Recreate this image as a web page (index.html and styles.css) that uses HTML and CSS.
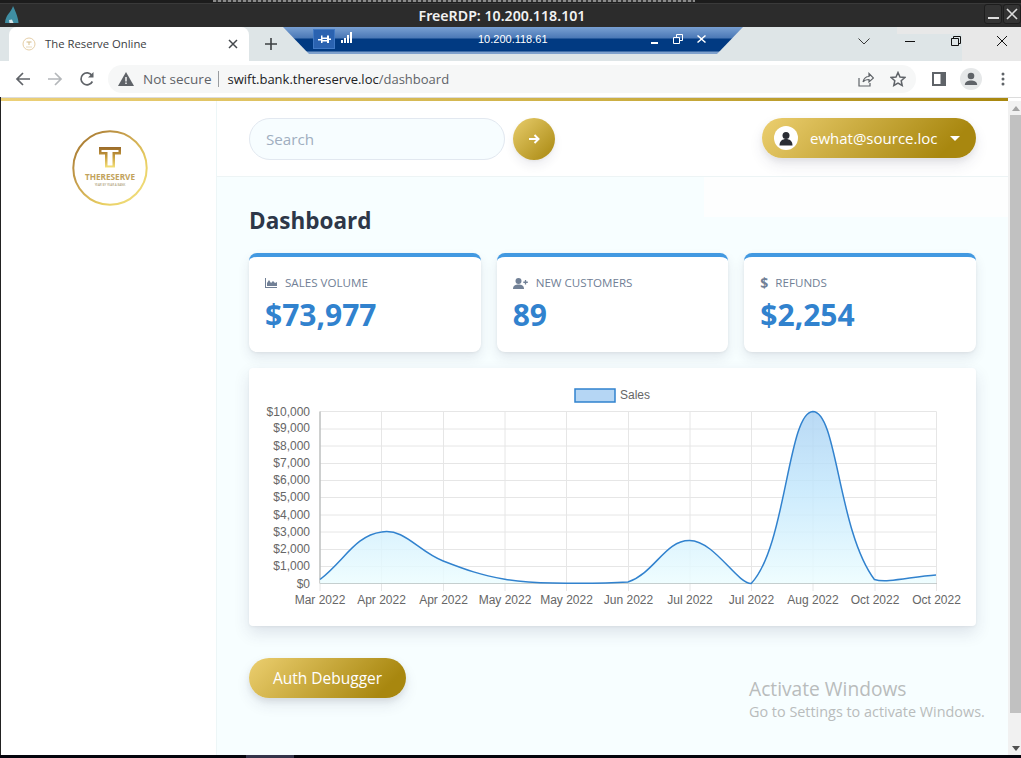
FILE: index.html
```html
<!DOCTYPE html>
<html lang="en">
<head>
<meta charset="utf-8">
<title>The Reserve Online</title>
<link rel="stylesheet" href="styles.css">
</head>
<body>
<div class="screen">
  <div class="remote-strip"><span class="remote-text"></span></div>
  <header class="rdp-title">
    <svg class="rdp-logo" viewBox="0 0 14 17" width="14" height="17"><path d="M8 0C7 4 3 8 1.500 11C.5 13 0 15 0 17H13.500C13.500 13 11 6 8 0Z" fill="#3f8ea3"/><path d="M4 14L7 13.500L8.500 17H4.500Z" fill="#d8e6ea"/></svg>
    <span class="rdp-name">FreeRDP: 10.200.118.101</span>
    <div class="rdp-controls">
      <span class="rdp-btn"><i class="rdp-min"></i></span>
      <span class="rdp-btn">
        <svg viewBox="0 0 12 12" width="12" height="12"><path d="M1 1 11 11M11 1 1 11" stroke="#ddd" stroke-width="1.6"/></svg>
      </span>
    </div>
  </header>

  <div class="tabstrip">
    <div class="tab">
      <svg class="favicon" viewBox="0 0 14 14" width="14" height="14"><circle cx="7" cy="7" r="6" fill="#fff" stroke="#e6cfa8" stroke-width="1"/><path d="M4.500 4.500H9.500V5.500H7.500V8H6.500V5.500H4.500Z" fill="#d5bd8a"/><path d="M4 10H10" stroke="#e2d2ae" stroke-width=".8"/></svg>
      <span class="tab-title">The Reserve Online</span>
      <svg class="tab-close" viewBox="0 0 10 10" width="10" height="10"><path d="M1 1 9 9M9 1 1 9" stroke="#45494d" stroke-width="1.500"/></svg>
    </div>
    <svg class="new-tab" viewBox="0 0 12 12" width="12" height="12"><path d="M6 0V12M0 6H12" stroke="#3c4043" stroke-width="1.600"/></svg>
    <div class="strip-fill"></div>
    <svg class="win-chevron" viewBox="0 0 12 7" width="12" height="7"><path d="M.5 .5 6 6 11.500 .5" fill="none" stroke="#3a3a3a"/></svg>
    <div class="win-controls">
      <span class="win-btn"><svg viewBox="0 0 10 10" width="10" height="10"><path d="M0 5.500H10" stroke="#111"/></svg></span>
      <span class="win-btn"><svg viewBox="0 0 10 10" width="10" height="10"><path d="M.5 2.500H7.500V9.500H.5ZM2.500 2.500V.5H9.500V7.500H7.500" fill="none" stroke="#111"/></svg></span>
      <span class="win-btn"><svg viewBox="0 0 10 10" width="10" height="10"><path d="M0 0 10 10M10 0 0 10" stroke="#111" stroke-width="1"/></svg></span>
    </div>
  </div>

  <div class="rdp-bar">
    <div class="pin-box"><svg viewBox="0 0 13 9" width="13" height="9"><path d="M0 4H3V0.500H4.500V8H3V5.500H0ZM4.500 2.500H9V4H4.500ZM4.500 5H9V6.500H4.500ZM9 .5H11V8H9ZM11 3.500H13V5H11Z" fill="#fff"/></svg></div>
    <svg class="signal" viewBox="0 0 11 11" width="11" height="11"><path d="M0 8H2V11H0ZM3 6H5V11H3ZM6 3H8V11H6ZM9 0H11V11H9Z" fill="#fff"/></svg>
    <span class="rdp-ip">10.200.118.61</span>
    <svg class="bar-min" viewBox="0 0 8 8" width="8" height="8"><path d="M0 6H7V8H0Z" fill="#fff"/></svg>
    <svg class="bar-restore" viewBox="0 0 10 10" width="10" height="10"><path d="M.5 3.500H6.500V9.500H.5ZM3.500 3V.5H9.500V6.500H7" fill="none" stroke="#fff" stroke-width="1"/></svg>
    <svg class="bar-close" viewBox="0 0 9 8" width="9" height="8"><path d="M1 0 4.500 3 8 0 9 1 5.500 4 9 7 8 8 4.500 5 1 8 0 7 3.500 4 0 1Z" fill="#fff"/></svg>
  </div>

  <nav class="toolbar">
    <svg class="tool-icon" viewBox="0 0 16 16" width="16" height="16"><path d="M15 8H2M8 2 2 8 8 14" fill="none" stroke="#5f6368" stroke-width="1.700"/></svg>
    <svg class="tool-icon" viewBox="0 0 16 16" width="16" height="16"><path d="M1 8H14M8 2 14 8 8 14" fill="none" stroke="#b4b7ba" stroke-width="1.700"/></svg>
    <svg class="tool-icon" viewBox="0 0 16 16" width="16" height="16"><path d="M13.400 10.500A6 6 0 1 1 13 4.500" fill="none" stroke="#5f6368" stroke-width="1.700"/><path d="M14.500 1V6.500H9Z" fill="#5f6368"/></svg>
    <div class="omnibox">
      <svg class="warn" viewBox="0 0 16 14" width="16" height="14"><path d="M8 0 16 14H0Z" fill="#5f6368"/><path d="M7.300 5H8.700V9.500H7.300ZM7.300 10.500H8.700V12H7.300Z" fill="#fff"/></svg>
      <span class="not-secure">Not secure</span>
      <span class="omni-sep"></span>
      <span class="url"><b>swift.bank.thereserve.loc</b>/dashboard</span>
      <svg class="omni-share" viewBox="0 0 16 16" width="16" height="16"><path d="M1 7V15H12V12M5 11C6 7 9 5.500 11 5.500V2.500L15.500 7 11 11V8.500C9 8.500 6.500 9 5 11Z" fill="none" stroke="#5f6368" stroke-width="1.200"/></svg>
      <svg class="omni-star" viewBox="0 0 16 16" width="16" height="16"><path d="M8 1.500 10 6 14.800 6.500 11.200 9.700 12.200 14.500 8 12 3.800 14.500 4.800 9.700 1.200 6.500 6 6Z" fill="none" stroke="#5f6368" stroke-width="1.500"/></svg>
    </div>
    <svg class="panel-icon" viewBox="0 0 14 14" width="14" height="14"><path d="M0 0H14V14H0Z" fill="#5f6368"/><path d="M2 2H8.500V12H2Z" fill="#fff"/></svg>
    <span class="profile"><svg viewBox="0 0 14 14" width="14" height="14"><circle cx="7" cy="4" r="3.300" fill="#5f6368"/><path d="M.8 13C1 9.500 4 8.500 7 8.500S13 9.500 13.200 13Z" fill="#5f6368"/></svg></span>
    <svg class="menu-dots" viewBox="0 0 4 14" width="4" height="14"><circle cx="2" cy="2" r="1.500" fill="#5f6368"/><circle cx="2" cy="7" r="1.500" fill="#5f6368"/><circle cx="2" cy="12" r="1.500" fill="#5f6368"/></svg>
  </nav>

  <div class="viewport">
    <div class="gold-row"><div class="gold-bar"></div></div>
    <div class="page">
      <aside class="sidebar">
        <svg class="logo" viewBox="0 0 76 76" width="76" height="76">
          <defs>
            <linearGradient id="ring" x1="0" y1="0" x2="1" y2="1">
              <stop offset="0" stop-color="#a0702a"/><stop offset=".4" stop-color="#c9a24e"/><stop offset=".7" stop-color="#e9cf62"/><stop offset="1" stop-color="#f3e388"/>
            </linearGradient>
            <linearGradient id="tee" x1="0" y1="0" x2="0" y2="1">
              <stop offset="0" stop-color="#9a6a2a"/><stop offset=".5" stop-color="#c9a040"/><stop offset="1" stop-color="#f6e27a"/>
            </linearGradient>
          </defs>
          <circle cx="38" cy="38" r="36.700" fill="#fff" stroke="url(#ring)" stroke-width="2"/>
          <path d="M27 17H49V24.500H43V37.500H33V24.500H27Z M29.500 20V22H35.500V35.500H40.500V22H46.500V20Z" fill="url(#tee)" fill-rule="evenodd"/>
          <text class="logo-word" x="38" y="50" text-anchor="middle">THERESERVE</text>
          <text class="logo-tag" x="38" y="55.500" text-anchor="middle">YEAR BY YEAR A BANK</text>
        </svg>
      </aside>
      <div class="main">
        <div class="topbar">
          <div class="search">Search</div>
          <button class="search-go"><svg viewBox="0 0 12 12" width="12" height="12"><path d="M1 6H10.500M6.500 2 10.500 6 6.500 10" fill="none" stroke="#fff" stroke-width="2"/></svg></button>
          <div class="user-pill">
            <span class="user-avatar"><svg viewBox="0 0 14 14" width="14" height="15"><circle cx="7" cy="4" r="3.500" fill="#2a2d34"/><path d="M.5 14C.5 9.500 3.500 7.500 7 7.500S13.500 9.500 13.500 14Z" fill="#2a2d34"/></svg></span>
            <span class="user-name">ewhat@source.loc</span>
            <span class="caret"></span>
          </div>
        </div>
        <div class="content">
          <div class="glare"></div>
          <h1 class="title">Dashboard</h1>
          <div class="stats">
            <div class="stat">
              <div class="stat-label">
                <svg class="stat-icon" viewBox="0 0 12 10" width="12" height="10"><path d="M0 0H1V9H12V10H0ZM2 8V5L4 2 6 5 8 3 10 5 12 4V8Z" fill="#718096"/></svg>
                <span>SALES VOLUME</span>
              </div>
              <div class="stat-value">$73,977</div>
            </div>
            <div class="stat">
              <div class="stat-label">
                <svg class="stat-icon" viewBox="0 0 15 11" width="15" height="11"><circle cx="5.500" cy="3" r="3" fill="#718096"/><path d="M0 11C0 7.500 2.500 6.500 5.500 6.500S11 7.500 11 11Z" fill="#718096"/><path d="M12.500 2V6.500M10.300 4.250H14.800" stroke="#718096" stroke-width="1.300"/></svg>
                <span>NEW CUSTOMERS</span>
              </div>
              <div class="stat-value">89</div>
            </div>
            <div class="stat">
              <div class="stat-label">
                <span class="stat-dollar">$</span>
                <span>REFUNDS</span>
              </div>
              <div class="stat-value">$2,254</div>
            </div>
          </div>

          <section class="chart-card">
            <svg class="chart" viewBox="0 0 727 258" width="727" height="258">
              <defs>
                <linearGradient id="area" gradientUnits="userSpaceOnUse" x1="0" y1="43" x2="0" y2="215">
                  <stop offset="0" stop-color="#a8d0f2" stop-opacity=".8"/>
                  <stop offset=".45" stop-color="#c0e6fc" stop-opacity=".8"/>
                  <stop offset="1" stop-color="#ecfdff" stop-opacity=".85"/>
                </linearGradient>
              </defs>
              <g class="grid">
                <path d="M71 43.500V223M132.500 43.500V223M194.500 43.500V223M256 43.500V223M317.500 43.500V223M379.500 43.500V223M441 43.500V223M502.500 43.500V223M564 43.500V223M626 43.500V223M687.500 43.500V223"/>
                <path d="M71 43.500H687.500M71 61H687.500M71 78H687.500M71 95.500H687.500M71 112.500H687.500M71 129.500H687.500M71 147H687.500M71 164H687.500M71 181.500H687.500M71 198.500H687.500"/>
              </g>
              <path class="axis" d="M71 43.500V215.500H687.500"/>
              <path class="area" d="M71 211.500C95.600 192.300 106.300 167.400 132.600 164C155.600 160 168.800 183.200 194.200 193C218.100 202.300 230.700 206.700 255.800 211.200C280 215.500 292.800 214.700 317.400 215.300C342 215.500 356.700 215.500 379 214C406 204.600 416.100 172.200 440.600 172.500C465.400 172.800 487.800 215.500 502.200 215.500C537.100 178.900 538.900 44.300 563.800 43.500C588.200 43.500 588.800 162.700 625.400 211.500C638 215.500 662.400 208.600 687 207V215.500H71Z" fill="url(#area)"/>
              <path class="line" d="M71 211.500C95.600 192.300 106.300 167.400 132.600 164C155.600 160 168.800 183.200 194.200 193C218.100 202.300 230.700 206.700 255.800 211.200C280 215.500 292.800 214.700 317.400 215.300C342 215.500 356.700 215.500 379 214C406 204.600 416.100 172.200 440.600 172.500C465.400 172.800 487.800 215.500 502.200 215.500C537.100 178.900 538.900 44.300 563.800 43.500C588.200 43.500 588.800 162.700 625.400 211.500C638 215.500 662.400 208.600 687 207"/>
              <rect class="legend-box" x="326" y="21" width="40" height="13"/>
              <text class="legend-text" x="371" y="31">Sales</text>
              <g class="y-labels">
                <text x="61" y="47.500">$10,000</text><text x="61" y="64">$9,000</text><text x="61" y="82">$8,000</text><text x="61" y="99">$7,000</text><text x="61" y="116">$6,000</text><text x="61" y="133">$5,000</text><text x="61" y="151">$4,000</text><text x="61" y="168">$3,000</text><text x="61" y="185">$2,000</text><text x="61" y="202">$1,000</text><text x="61" y="219.500">$0</text>
              </g>
              <g class="x-labels">
                <text x="71" y="236">Mar 2022</text><text x="132.500" y="236">Apr 2022</text><text x="194.500" y="236">Apr 2022</text><text x="256" y="236">May 2022</text><text x="317.500" y="236">May 2022</text><text x="379.500" y="236">Jun 2022</text><text x="441" y="236">Jul 2022</text><text x="502.500" y="236">Jul 2022</text><text x="564" y="236">Aug 2022</text><text x="626" y="236">Oct 2022</text><text x="687.500" y="236">Oct 2022</text>
              </g>
            </svg>
          </section>

          <button class="auth-btn">Auth Debugger</button>
        </div>
      </div>
      <div class="scrollbar">
        <span class="scroll-up"></span>
        <span class="scroll-thumb"></span>
        <span class="scroll-down"></span>
      </div>
      <div class="activate">
        <div class="activate-title">Activate Windows</div>
        <div class="activate-sub">Go to Settings to activate Windows.</div>
      </div>
    </div>
  </div>
  <footer class="taskbar"><span class="task-item"></span></footer>
</div>
</body>
</html>
```
FILE: styles.css
```css
* { box-sizing: border-box; }
html, body { margin: 0; padding: 0; }
body { width: 1021px; height: 758px; overflow: hidden; font-family: "Open Sans", "Liberation Sans", sans-serif; background: #000; }
.screen { position: relative; width: 1021px; height: 758px; display: flex; flex-direction: column; overflow: hidden; }

.remote-strip { height: 3px; background: #1c1c1c; display: flex; padding-left: 213px; flex: none; }
.remote-text { width: 482px; height: 2px; background: repeating-linear-gradient(90deg, #8a8a8a 0 3px, #3a3a3a 3px 5px); }

.rdp-title { height: 24px; flex: none; background: #2c2c2c; display: flex; align-items: center; justify-content: center; position: relative; color: #f2f2f2; border-top: 1px solid #3a3a3a; padding-right: 17px; }
.rdp-logo { position: absolute; left: 5px; top: 2px; }
.rdp-name { font: 600 14.200px "Noto Sans", "Open Sans", sans-serif; }
.rdp-controls { position: absolute; right: 0; top: 0; display: flex; gap: 1px; }
.rdp-btn { width: 18px; height: 20px; border: 1px solid #1d1d1d; border-radius: 3px; background: #333; display: flex; align-items: center; justify-content: center; }
.rdp-min { display: block; width: 11px; height: 2px; background: #ddd; margin-top: 8px; }

.tabstrip { height: 34px; flex: none; background: #dee5e7; display: flex; align-items: center; padding-left: 9px; position: relative; background-image: linear-gradient(#e8e8e8, #e8e8e8), linear-gradient(#e8e8e8, #e8e8e8); background-size: 124px 7px, 59px 27px; background-position: right top, right bottom; background-repeat: no-repeat; }
.tab { width: 240px; height: 34px; background: #fff; border-radius: 8px 8px 0 0; display: flex; align-items: center; padding: 0 11px 0 13px; }
.favicon { flex: none; }
.tab-title { margin: -2px 0 0 9px; font: 11.300px "Open Sans", sans-serif; color: #3c4043; flex: 1; }
.tab-close { flex: none; }
.new-tab { margin-left: 16px; flex: none; }
.strip-fill { flex: 1; }
.win-chevron { flex: none; margin: -6px 17px 0 0; }
.win-controls { display: flex; flex: none; margin: -6px -4px 0 0; }
.win-btn { width: 46px; display: flex; justify-content: center; }

.rdp-bar { position: absolute; left: 283px; top: 27px; width: 460px; height: 27px; clip-path: polygon(0 0, 100% 0, 434px 100%, 26px 100%); background: linear-gradient(#79a0d2 0, #4a78b6 11px, #013a82 12px, #013a82 24px, #7ea0cc 25px, #7ea0cc 27px); color: #fff; }
.pin-box { position: absolute; left: 30px; top: 2px; width: 22px; height: 20px; background: #2a62b0; border: 1px solid #3f78c4; display: flex; align-items: center; justify-content: center; }
.signal { position: absolute; left: 58px; top: 5px; }
.rdp-ip { position: absolute; left: 195px; top: 6px; font: 11px "Liberation Sans", sans-serif; }
.bar-min { position: absolute; left: 368px; top: 9px; }
.bar-restore { position: absolute; left: 390px; top: 7px; }
.bar-close { position: absolute; left: 414px; top: 8px; }

.toolbar { height: 36px; flex: none; background: #fff; display: flex; align-items: center; padding-left: 15px; }
.tool-icon { flex: none; margin-right: 16px; }
.omnibox { width: 808px; height: 28px; margin-left: -3px; background: #f6f7f7; border-radius: 14px; display: flex; align-items: center; padding-left: 10px; flex: none; }
.warn { flex: none; }
.not-secure { margin-left: 9px; font: 13.500px "Open Sans", sans-serif; color: #5f6368; }
.omni-sep { width: 1px; height: 16px; background: #9a9da0; margin: 0 8px 0 7px; }
.url { font: 13px "Open Sans", sans-serif; color: #5f6368; flex: 1; white-space: nowrap; }
.url b { font-weight: 400; color: #202124; }
.omni-share { flex: none; margin-right: 16px; }
.omni-star { flex: none; margin-right: 10px; }
.panel-icon { flex: none; margin-left: 16px; }
.profile { width: 22px; height: 22px; border-radius: 50%; background: #e6e8e9; display: flex; align-items: center; justify-content: center; margin-left: 14px; flex: none; }
.menu-dots { flex: none; margin-left: 19px; }

.viewport { flex: 1; min-height: 0; border-left: 1px solid #222; background: #fff; display: flex; flex-direction: column; }
.gold-row { height: 4px; flex: none; border-top: 1px solid #dcdcdc; background: #fff; padding-right: 13px; }
.gold-bar { height: 3px; background: linear-gradient(90deg, #ecd078, #cdb045 60%, #a8870f); }
.page { flex: 1; min-height: 0; display: flex; position: relative; }
.sidebar { width: 216px; flex: none; background: #fff; border-right: 1px solid #edf6f7; display: flex; justify-content: center; align-items: flex-start; padding-top: 29px; }
.logo { display: block; margin-left: 3px; }
.logo-word { font: 700 8.200px "Open Sans", sans-serif; fill: #c2a35c; }
.logo-tag { font: 3px "Open Sans", sans-serif; fill: #9b8a5c; }

.main { width: 791px; flex: none; display: flex; flex-direction: column; background: #f7feff; }
.topbar { height: 76px; flex: none; background: #fff; border-bottom: 1px solid #edf4f5; display: flex; align-items: flex-start; padding: 17px 32px 0; }
.search { width: 256px; height: 42px; border: 1px solid #e2e8f0; border-radius: 21px; background: #f7fdff; padding: 0 16px; font-size: 15.200px; line-height: 40px; color: #a0aec0; }
.search-go { width: 42px; height: 42px; margin-left: 8px; border: 0; border-radius: 50%; padding: 0; background: linear-gradient(135deg, #e8cd6c, #a8870f); box-shadow: 0 6px 10px rgba(50, 50, 93, .08), 0 1px 3px rgba(0, 0, 0, .06); display: flex; align-items: center; justify-content: center; }
.user-pill { margin-left: auto; width: 214px; height: 40px; border-radius: 20px; background: linear-gradient(135deg, #eccf70, #a8870f 85%); box-shadow: 0 7px 14px rgba(50, 50, 93, .1), 0 3px 6px rgba(0, 0, 0, .06); display: flex; align-items: center; padding-left: 12px; color: #fff; }
.user-avatar { width: 24px; height: 24px; border-radius: 50%; background: #fff; display: flex; align-items: center; justify-content: center; flex: none; }
.user-name { margin-left: 12px; font-size: 15px; white-space: nowrap; }
.caret { margin-left: 13px; border: 5.500px solid transparent; border-top: 5.500px solid #fff; border-bottom: 0; }

.content { flex: 1; position: relative; padding: 26px 32px 0; }
.glare { position: absolute; right: 0; top: 0; width: 304px; height: 40px; background: #fdfefe; }
.title { position: relative; margin: 0; height: 36px; font-size: 22.500px; line-height: 36px; font-weight: 700; color: #2d3748; }
.stats { position: relative; margin-top: 14px; display: grid; grid-template-columns: repeat(3, 1fr); gap: 16px; }
.stat { height: 99px; background: #fff; border-top: 4px solid #4299e1; border-radius: 8px; box-shadow: 0 6px 12px rgba(50, 50, 93, .1), 0 1px 3px rgba(0, 0, 0, .06); padding: 17px 16px 0; }
.stat-label { display: flex; align-items: center; font-size: 11.600px; line-height: 18px; color: #718096; }
.stat-icon { margin-right: 8px; flex: none; }
.stat-dollar { font-weight: 700; font-size: 14px; margin-right: 7px; }
.stat-value { margin-top: 3px; font-size: 30px; line-height: 40px; font-weight: 700; color: #3182ce; }

.chart-card { margin-top: 16px; height: 258px; background: #fff; border-radius: 4px; box-shadow: 0 7px 16px rgba(50, 50, 93, .13), 0 1px 3px rgba(0, 0, 0, .05); }
.chart { display: block; }
.grid path { fill: none; stroke: #e6e6e6; stroke-width: 1; }
.axis { fill: none; stroke: #a8acab; stroke-width: 1; }
.line { fill: none; stroke: #3182ce; stroke-width: 1.500; }
.legend-box { fill: #b5d6f4; stroke: #3182ce; stroke-width: 1.500; }
.legend-text, .y-labels text, .x-labels text { font: 12px "Liberation Sans", sans-serif; fill: #666; }
.y-labels text { text-anchor: end; }
.x-labels text { text-anchor: middle; }

.auth-btn { display: block; margin-top: 32px; width: 157px; height: 40px; border: 0; border-radius: 20px; background: linear-gradient(135deg, #eccf70, #a8870f 85%); box-shadow: 0 7px 14px rgba(50, 50, 93, .1), 0 3px 6px rgba(0, 0, 0, .08); color: #fff; font: 15.500px "Open Sans", sans-serif; padding: 0; }

.scrollbar { flex: 1; position: relative; background: #f1f1f1; padding-left: 2px; display: flex; flex-direction: column; }
.scroll-up { height: 14px; flex: none; background: #f1f1f1; position: relative; }
.scroll-up::after { content: ""; position: absolute; left: 2px; top: 5px; border: 4px solid transparent; border-bottom: 5px solid #a3a3a3; border-top: 0; }
.scroll-thumb { height: 598px; flex: none; background: #c1c1c1; }
.scroll-down { flex: 1; position: relative; }
.scroll-down::after { content: ""; position: absolute; left: 2px; bottom: 4px; border: 4px solid transparent; border-top: 5px solid #505050; border-bottom: 0; }

.activate { position: absolute; left: 748px; top: 575px; color: #b9bcbc; pointer-events: none; }
.activate-title { font-size: 19.200px; line-height: 26px; }
.activate-sub { font-size: 14.400px; line-height: 20px; white-space: nowrap; }

.taskbar { height: 3px; flex: none; background: #04040c; padding-left: 246px; }
.task-item { display: block; width: 48px; height: 3px; background: #34344a; }
```
